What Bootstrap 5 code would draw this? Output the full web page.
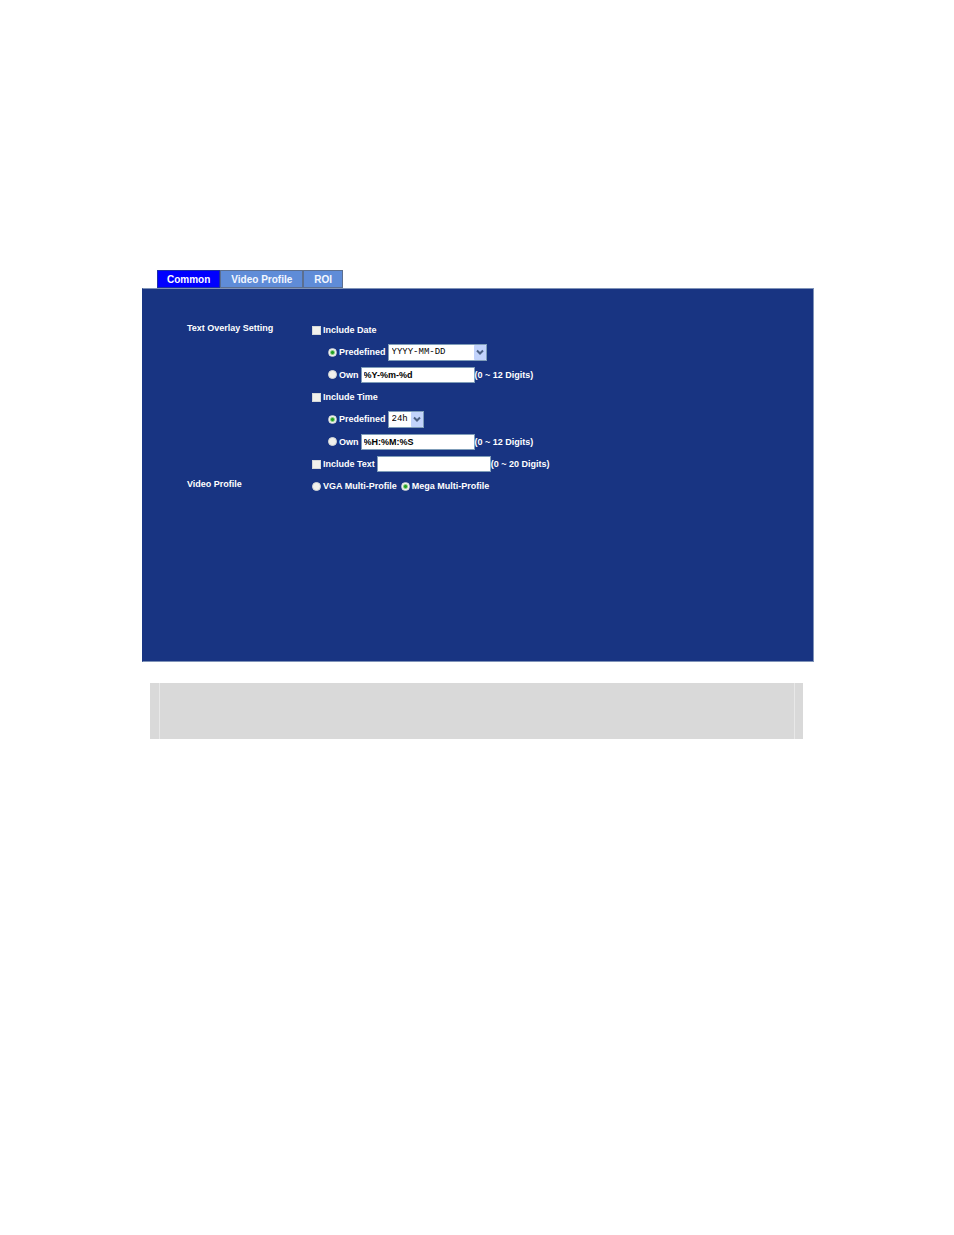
<!DOCTYPE html>
<html lang="en">
<head>
<meta charset="utf-8">
<meta name="viewport" content="width=device-width, initial-scale=1">
<title>Video settings - Common</title>
<link href="https://cdn.jsdelivr.net/npm/bootstrap@5.3.0/dist/css/bootstrap.min.css" rel="stylesheet">
<style>
body{font-family:"Liberation Sans",Arial,sans-serif;font-size:9px;font-weight:700;line-height:12px;color:#000;background:#fff}
.page{padding:270px 140px 40px 142px}
.tabs{padding-left:15px}
.tabs .nav-link{height:18px;padding:0 10px;border:1px solid #5c6f90;border-radius:0;background:#5f8cd8;color:#f4f8ff;font-size:10px;line-height:17px}
.tabs .nav-link.active{padding:0 9px;background:#00f;border-color:#1c2fa8;color:#fff}
.panel{min-height:374px;padding:30px 44px 0;background:#183482;border:1px solid #7f93b8;border-left-color:#183482;color:#fff}
.section-title{width:125px;flex:none;padding-top:3px;font-size:9px;line-height:12px;font-weight:700;margin:0}
.line{height:22px;display:flex;align-items:center}
.line.field{height:23px}
.sub{padding-left:16px}
.tick,.dot{appearance:none;flex:none;width:9px;height:9px;margin:0 2px 0 0;background:#f1f1ec;border:1px solid #d5d8d8}
.dot{border-radius:50%}
.dot:checked{background:radial-gradient(circle,#20a020 0 1px,#f4f6f0 3px)}
.entry{width:114px;height:16px;margin-left:2px;padding:0 2px;border:1px solid #7f9db9;border-radius:0;background:#fff;color:#000;font-size:9px;line-height:14px;font-weight:700}
.pick{height:17px;margin-left:2px;padding:0 3px;appearance:none;border:1px solid #7f9db9;border-radius:0;color:#000;font:9px/13px "Liberation Mono",monospace;
background:#fff url("data:image/svg+xml,%3Csvg xmlns='http://www.w3.org/2000/svg' width='12' height='15'%3E%3Crect width='12' height='15' rx='1' fill='%23c2d3fc'/%3E%3Cpath d='M3 5.500l3 3 3-3' fill='none' stroke='%234d6185' stroke-width='2'/%3E%3C/svg%3E") right center no-repeat}
.pick-date{width:99px}
.pick-hour{width:36px}
.note{margin:21px 11px 0 8px;height:56px;background:#d9d9d9;padding:0 8px 0 9px}
.note-body{height:100%;border:solid #e8e8e8;border-width:0 1px}
</style>
</head>
<body>
<main class="page">
<nav class="nav tabs" aria-label="Settings">
<a class="nav-link active" href="#common" aria-current="page">Common</a>
<a class="nav-link" href="#profile">Video Profile</a>
<a class="nav-link" href="#roi">ROI</a>
</nav>
<form class="panel" id="common">
<section class="d-flex">
<h2 class="section-title">Text Overlay Setting</h2>
<div>
<div class="line"><input class="tick" type="checkbox" id="incDate"><label for="incDate">Include Date</label></div>
<div class="line sub"><input class="dot" type="radio" name="date" id="datePre" checked><label for="datePre">Predefined</label>
<select class="pick pick-date" aria-label="Date format"><option>YYYY-MM-DD</option></select></div>
<div class="line field sub"><input class="dot" type="radio" name="date" id="dateOwn"><label for="dateOwn">Own</label>
<input class="entry" type="text" value="%Y-%m-%d" aria-label="Own date format"><span>(0 ~ 12 Digits)</span></div>
<div class="line"><input class="tick" type="checkbox" id="incTime"><label for="incTime">Include Time</label></div>
<div class="line sub"><input class="dot" type="radio" name="time" id="timePre" checked><label for="timePre">Predefined</label>
<select class="pick pick-hour" aria-label="Time format"><option>24h</option></select></div>
<div class="line field sub"><input class="dot" type="radio" name="time" id="timeOwn"><label for="timeOwn">Own</label>
<input class="entry" type="text" value="%H:%M:%S" aria-label="Own time format"><span>(0 ~ 12 Digits)</span></div>
<div class="line"><input class="tick" type="checkbox" id="incText"><label for="incText">Include Text</label>
<input class="entry" type="text" aria-label="Overlay text"><span>(0 ~ 20 Digits)</span></div>
</div>
</section>
<section class="d-flex">
<h2 class="section-title">Video Profile</h2>
<div class="line"><input class="dot" type="radio" name="profile" id="vga"><label class="me-1" for="vga">VGA Multi-Profile</label>
<input class="dot" type="radio" name="profile" id="mega" checked><label for="mega">Mega Multi-Profile</label></div>
</section>
</form>
<div class="note"><div class="note-body"></div></div>
</main>
<script src="https://cdn.jsdelivr.net/npm/bootstrap@5.3.0/dist/js/bootstrap.bundle.min.js"></script>
</body>
</html>
